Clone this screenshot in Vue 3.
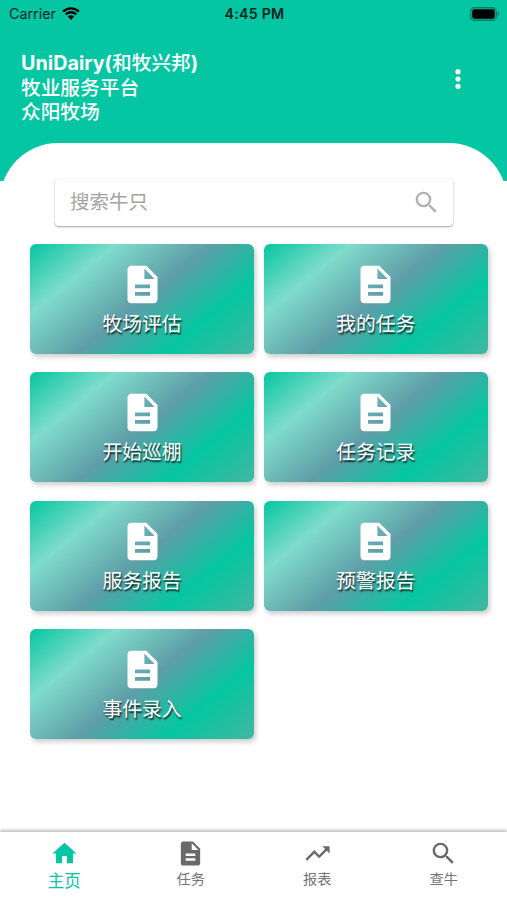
<script setup>
const cards = ['牧场评估', '我的任务', '开始巡棚', '任务记录', '服务报告', '预警报告', '事件录入']

const icons = {
  home: 'M10 20v-6h4v6h5v-8h3L12 3 2 12h3v8z',
  doc: 'M14 2H6c-1.1 0-1.99.9-1.99 2L4 20c0 1.1.89 2 1.99 2H18c1.1 0 2-.9 2-2V8l-6-6zm2 16H8v-2h8v2zm0-4H8v-2h8v2zm-3-5V3.5L18.5 9H13z',
  trend: 'M16 6l2.29 2.29-4.88 4.88-4-4L2 16.59 3.41 18l6-6 4 4 6.3-6.29L22 12V6z',
  search: 'M15.5 14h-.79l-.28-.27A6.471 6.471 0 0 0 16 9.5 6.5 6.5 0 1 0 9.5 16c1.61 0 3.09-.59 4.23-1.57l.27.28v.79l5 4.99L20.49 19l-4.99-5zm-6 0C7.01 14 5 11.99 5 9.5S7.01 5 9.5 5 14 7.01 14 9.5 11.99 14 9.5 14z',
}

const tabs = [
  { label: '主页', icon: icons.home, active: true },
  { label: '任务', icon: icons.doc },
  { label: '报表', icon: icons.trend },
  { label: '查牛', icon: icons.search },
]
</script>

<template>
  <div class="screen">
    <header class="header">
      <div class="status">
        <div class="carrier">
          <span>Carrier</span>
          <svg class="wifi" viewBox="0 0 18 13">
            <path d="M1.1 4.6a11.3 11.3 0 0 1 15.8 0M3.8 7.4a7.4 7.4 0 0 1 10.4 0" fill="none" stroke="currentColor" stroke-width="2.3" />
            <path d="M9 13L5.8 9.6a4.6 4.6 0 0 1 6.4 0z" fill="currentColor" />
          </svg>
        </div>
        <span class="clock">4:45 PM</span>
        <div class="power">
          <svg class="battery" viewBox="0 0 30 14">
            <rect x=".7" y=".7" width="25.6" height="12.6" rx="3.6" fill="none" stroke="#087c68" stroke-width="1.4" />
            <rect x="2.2" y="2.3" width="22.6" height="9.4" rx="2" fill="#000" />
            <path d="M27.6 4.8c2 .7 2 3.7 0 4.4z" fill="#087c68" />
          </svg>
        </div>
      </div>
      <div class="bar">
        <h1 class="title">
          <span><b>UniDairy(</b>和牧兴邦<b>)</b></span>
          <span>牧业服务平台</span>
          <span>众阳牧场</span>
        </h1>
        <svg class="more" viewBox="0 0 6 20">
          <circle cx="3" cy="2.7" r="2.6" />
          <circle cx="3" cy="10" r="2.6" />
          <circle cx="3" cy="17.3" r="2.6" />
        </svg>
      </div>
    </header>

    <main class="panel">
      <div class="search">
        <span>搜索牛只</span>
        <svg viewBox="0 0 24 24"><path :d="icons.search" /></svg>
      </div>
      <div class="grid">
        <div v-for="name in cards" :key="name" class="card">
          <svg viewBox="0 0 24 24"><path :d="icons.doc" /></svg>
          <span>{{ name }}</span>
        </div>
      </div>
    </main>

    <nav class="tabs">
      <div v-for="tab in tabs" :key="tab.label" class="tab" :class="{ active: tab.active }">
        <svg viewBox="0 0 24 24"><path :d="tab.icon" /></svg>
        <span>{{ tab.label }}</span>
      </div>
    </nav>
  </div>
</template>

<style>
body {
  margin: 0;
  background: #fff;
}
</style>

<style scoped>
.screen {
  display: flex;
  flex-direction: column;
  height: 900px;
  overflow: hidden;
  background: #fff;
  font-family: Inter, "Noto Sans CJK SC", sans-serif;
}
svg {
  display: block;
  fill: currentColor;
}
.header {
  flex: none;
  box-sizing: border-box;
  height: 181px;
  background: #05c6a3;
}
.status {
  display: grid;
  grid-template-columns: 1fr auto 1fr;
  align-items: center;
  height: 27px;
  padding: 0 7px 0 9px;
  color: #062b25;
  font-size: 14.3px;
}
.carrier {
  display: flex;
  align-items: center;
  gap: 6px;
}
.wifi {
  width: 18px;
  height: 13px;
  color: #000;
}
.clock {
  color: #04231e;
  font-size: 14.2px;
  font-weight: 600;
  letter-spacing: 0.25px;
}
.power {
  display: flex;
  justify-content: flex-end;
}
.battery {
  width: 30px;
  height: 14px;
}
.bar {
  display: flex;
  justify-content: space-between;
  padding: 24px 46px 0 21px;
  color: #fff;
}
.title {
  display: flex;
  flex-direction: column;
  margin: 0;
  font-size: 19.7px;
  font-weight: 500;
  line-height: 24.6px;
}
.title b {
  font-weight: 650;
  letter-spacing: 0.05px;
}
.more {
  width: 6px;
  height: 20px;
  margin-top: 18px;
}
.panel {
  flex: 1;
  box-sizing: border-box;
  margin-top: -38.5px;
  padding: 36px 19px 0 30px;
  border-radius: 58px 58px 0 0;
  background: #fff;
}
.search {
  display: flex;
  align-items: center;
  justify-content: space-between;
  box-sizing: border-box;
  width: 398px;
  height: 47px;
  margin-left: 25px;
  padding: 0 12px 0 15px;
  border-radius: 4px;
  background: #fff;
  box-shadow: 0 1px 2px rgba(0, 0, 0, 0.38), 0 0 2px rgba(0, 0, 0, 0.06);
  color: #a3a3a3;
  font-size: 19.5px;
}
.search span {
  padding-bottom: 3px;
}
.search svg {
  width: 29px;
  height: 29px;
  color: #b2b2b2;
}
.grid {
  display: grid;
  grid-template-columns: 224px 224px;
  gap: 18.3px 9.7px;
  margin-top: 18.6px;
}
.card {
  display: flex;
  flex-direction: column;
  align-items: center;
  box-sizing: border-box;
  height: 110px;
  padding-top: 18px;
  border-radius: 6px;
  background: linear-gradient(141deg, #05c6a1 0%, #7fdccb 24%, #5f9ea8 50%, #05c6a1 74.5%, #42b7a0 100%);
  box-shadow: 2px 3px 5px rgba(0, 0, 0, 0.2);
  color: #fff;
}
.card svg {
  width: 45px;
  height: 45px;
}
.card span {
  font-size: 19.8px;
  line-height: 28px;
  margin-top: 3px;
  text-shadow: 1px 1.5px 1.5px rgba(0, 0, 0, 0.75);
}
.tabs {
  display: grid;
  grid-template-columns: repeat(4, 1fr);
  flex: none;
  box-sizing: border-box;
  height: 68px;
  padding-left: 1px;
  background: #fff;
  box-shadow: 0 -2px 3px rgba(0, 0, 0, 0.25);
}
.tab {
  display: flex;
  flex-direction: column;
  align-items: center;
  padding-top: 7px;
  color: #757575;
  font-size: 14.2px;
  line-height: 20px;
}
.tab svg {
  width: 29px;
  height: 29px;
  color: #6a6a6a;
}
.tab span {
  margin-top: 1px;
}
.tab.active,
.tab.active svg {
  color: #05c6a3;
}
.tab.active {
  font-size: 16.5px;
}
.tab.active span {
  margin-top: 3px;
}
</style>
